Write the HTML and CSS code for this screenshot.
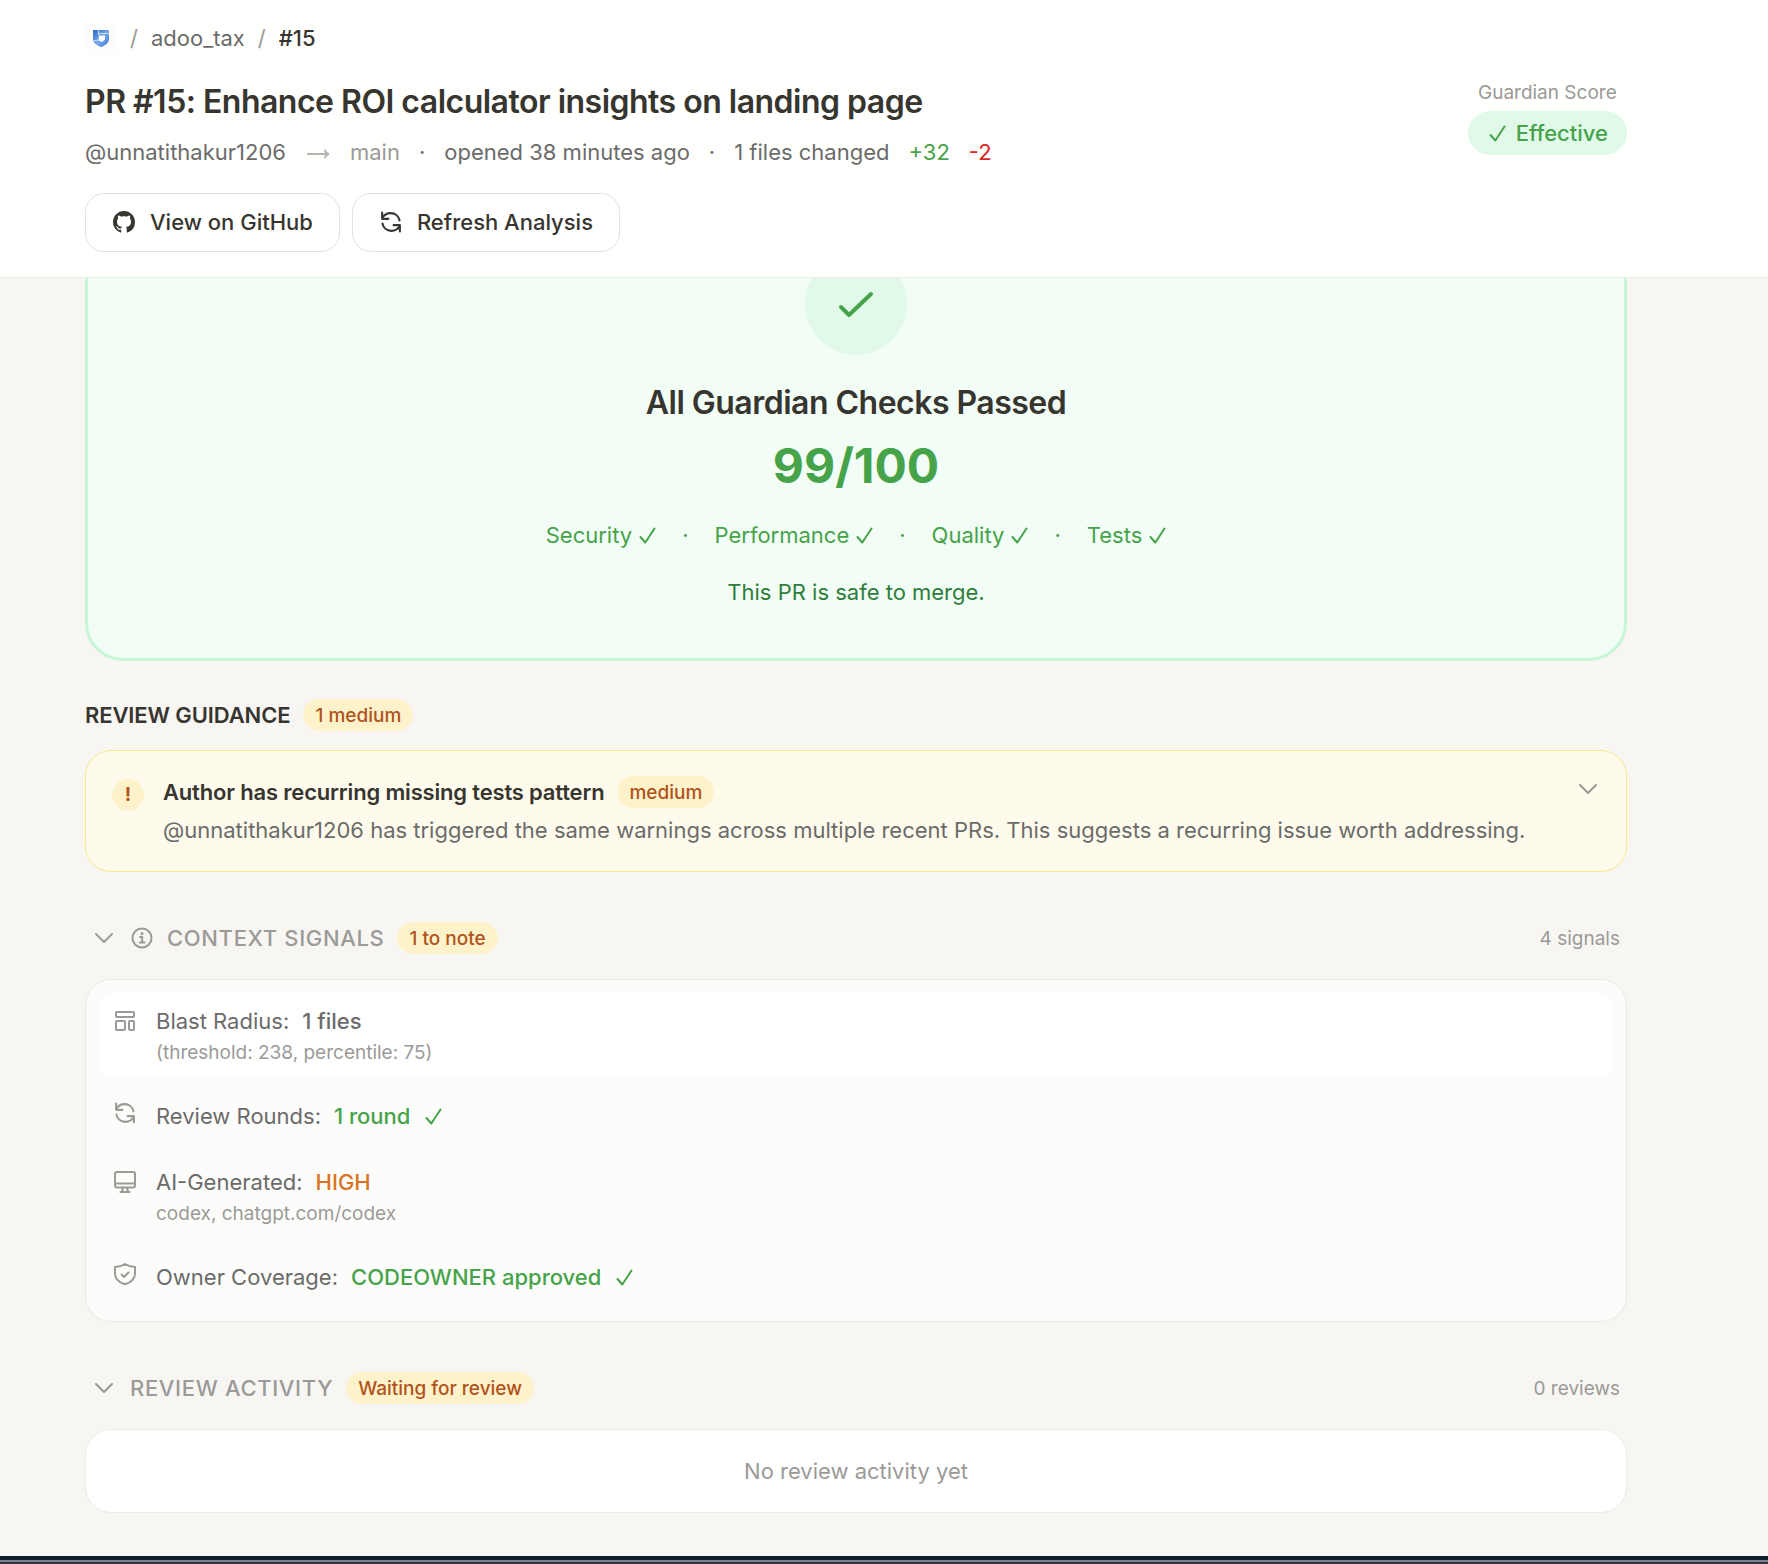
FILE: index.html
```html
<!DOCTYPE html>
<html lang="en">
<head>
<meta charset="utf-8">
<meta name="viewport" content="width=device-width, initial-scale=1">
<title>PR #15: Enhance ROI calculator insights on landing page</title>
<link rel="stylesheet" href="styles.css">
</head>
<body>
<svg class="sprite" aria-hidden="true">
  <symbol id="refresh" viewBox="0 0 20 20"><path d="M1.500 1v6h6M1.500 6.500C3 3.500 6 1.500 9.700 1.500c4.300 0 7.700 3 8.500 7M18.500 19v-6h-6M18.500 13.500c-1.500 3-4.500 5-8.200 5-4.300 0-7.700-3-8.500-7" transform="translate(.5 .5) scale(.95)"/></symbol>
  <symbol id="chevron" viewBox="0 0 20 20"><path d="M2 6l8 8 8-8"/></symbol>
  <symbol id="tick" viewBox="0 0 17 17"><path d="M1.500 10l4.800 5.500L15.500 1.500"/></symbol>
</svg>

<header class="header">
  <nav class="crumbs" aria-label="Breadcrumb">
    <a class="logo" href="#" aria-label="Home">
      <svg viewBox="0 0 32 32" width="32" height="32" aria-hidden="true">
        <defs><linearGradient id="shield" x1="0" y1="0" x2="1" y2="1"><stop offset="0" stop-color="#2f69c4"/><stop offset=".5" stop-color="#75a7ea"/><stop offset="1" stop-color="#3a7cdb"/></linearGradient></defs>
        <rect width="32" height="32" fill="#fdfdfe"/>
        <path d="M8 8h16v9c0 4-4 6.500-8 8-4-1.500-8-4-8-8z" fill="url(#shield)"/>
        <path d="M14 13.500h6v4L17 20l-3.500-1.500z" fill="#fff"/>
        <path d="M13.500 8.500v5M13.500 11.500h10.500M8 19l5.500-1" stroke="#c9def8" stroke-width="1"/>
      </svg>
    </a>
    <span class="sep">/</span>
    <a href="#">adoo_tax</a>
    <span class="sep">/</span>
    <span class="current" aria-current="page">#15</span>
  </nav>
  <div class="headline">
    <div>
      <h1>PR #15: Enhance ROI calculator insights on landing page</h1>
      <div class="meta">
        <span>@unnatithakur1206</span>
        <svg class="arrow" viewBox="0 0 26 32" aria-label="into" role="img"><path d="M3 18h20M20 14.500c.5 1.800 1.500 3 3.500 3.500-2 .5-3 1.700-3.500 3.500"/></svg>
        <span class="faint">main</span>
        <span>·</span>
        <span>opened 38 minutes ago</span>
        <span>·</span>
        <span>1 files changed</span>
        <span class="added">+32</span>
        <span class="removed">-2</span>
      </div>
    </div>
    <div class="score">
      <span class="score-label">Guardian Score</span>
      <span class="score-pill"><svg class="tick line" aria-hidden="true"><use href="#tick"/></svg>Effective</span>
    </div>
  </div>
  <div class="actions">
    <a class="button" href="#">
      <svg class="icon" viewBox="0 0 16 16" aria-hidden="true"><path fill="currentColor" d="M8 0C3.580 0 0 3.580 0 8c0 3.540 2.290 6.530 5.470 7.590.4.070.55-.17.55-.38 0-.19-.01-.82-.01-1.490-2.010.37-2.530-.49-2.690-.94-.09-.23-.48-.94-.82-1.130-.28-.15-.68-.52-.01-.53.63-.01 1.080.58 1.230.82.72 1.210 1.870.87 2.330.66.07-.52.28-.87.51-1.070-1.780-.2-3.640-.89-3.640-3.950 0-.87.31-1.590.82-2.150-.08-.2-.36-1.020.08-2.120 0 0 .67-.21 2.200.82.640-.18 1.320-.27 2-.27s1.360.09 2 .27c1.530-1.040 2.200-.82 2.200-.82.44 1.100.16 1.920.08 2.120.51.56.82 1.270.82 2.150 0 3.070-1.870 3.750-3.650 3.950.29.25.54.73.54 1.480 0 1.070-.01 1.930-.01 2.200 0 .21.15.46.55.38A8.010 8.010 0 0 0 16 8c0-4.420-3.580-8-8-8z"/></svg>
      View on GitHub
    </a>
    <button class="button" type="button">
      <svg class="icon line" aria-hidden="true"><use href="#refresh"/></svg>
      Refresh Analysis
    </button>
  </div>
</header>

<main class="main">
  <section class="passed">
    <div class="passed-icon"><svg class="line" viewBox="0 0 40 32" width="40" height="32" aria-hidden="true"><path d="M5 19l8 8L35 6"/></svg></div>
    <h2>All Guardian Checks Passed</h2>
    <p class="total">99/100</p>
    <p class="checks">
      <span class="check">Security<svg class="tick line" aria-hidden="true"><use href="#tick"/></svg></span><span>·</span>
      <span class="check">Performance<svg class="tick line" aria-hidden="true"><use href="#tick"/></svg></span><span>·</span>
      <span class="check">Quality<svg class="tick line" aria-hidden="true"><use href="#tick"/></svg></span><span>·</span>
      <span class="check">Tests<svg class="tick line" aria-hidden="true"><use href="#tick"/></svg></span>
    </p>
    <p class="safe">This PR is safe to merge.</p>
  </section>

  <section class="guidance">
    <div class="guidance-head"><h2>REVIEW GUIDANCE</h2><span class="badge">1 medium</span></div>
    <article class="warning">
      <span class="alert">!</span>
      <div class="warning-text">
        <div class="warning-title"><h3>Author has recurring missing tests pattern</h3><span class="badge">medium</span></div>
        <p>@unnatithakur1206 has triggered the same warnings across multiple recent PRs. This suggests a recurring issue worth addressing.</p>
      </div>
      <button class="toggle" type="button" aria-label="Expand"><svg class="chevron line" aria-hidden="true"><use href="#chevron"/></svg></button>
    </article>
  </section>

  <section class="group">
    <button class="group-head" type="button">
      <svg class="chevron line" aria-hidden="true"><use href="#chevron"/></svg>
      <svg class="icon line" viewBox="0 0 22 22" aria-hidden="true"><circle cx="11" cy="11" r="9.500"/><path d="M9 10h2.200v5.500M8.800 15.500h4.700"/><circle cx="11" cy="6.600" r=".6"/></svg>
      <span class="group-title">CONTEXT SIGNALS</span>
      <span class="badge">1 to note</span>
      <span class="count">4 signals</span>
    </button>
    <ul class="signals">
      <li class="signal active">
        <svg class="icon line" viewBox="0 0 22 22" aria-hidden="true"><rect x="2" y="2" width="18" height="5" rx="1"/><rect x="2" y="11" width="9" height="9" rx="1"/><rect x="15" y="11" width="5" height="9" rx="1"/></svg>
        <div><p class="line-text">Blast Radius: <strong>1 files</strong></p><p class="note">(threshold: 238, percentile: 75)</p></div>
      </li>
      <li class="signal tall">
        <svg class="icon line" aria-hidden="true"><use href="#refresh"/></svg>
        <p class="line-text">Review Rounds: <strong class="good">1 round</strong><svg class="tick line" aria-hidden="true"><use href="#tick"/></svg></p>
      </li>
      <li class="signal">
        <svg class="icon line" viewBox="0 0 22 22" aria-hidden="true"><rect x="1" y="1" width="20" height="15.500" rx="2"/><path d="M1 12.500h20M9 16.500L8 21M13 16.500l1 4.500M6.500 21h9"/></svg>
        <div><p class="line-text">AI-Generated: <strong class="high">HIGH</strong></p><p class="note">codex, chatgpt.com/codex</p></div>
      </li>
      <li class="signal tall">
        <svg class="icon line" viewBox="0 0 22 22" aria-hidden="true"><path d="M11 1c3 2 6 3 10 3v6.500c0 5-4 9-10 10.800C5 19.500 1 15.500 1 10.500V4c4 0 7-1 10-3zM7.500 11.500l2.500 2.500 4.500-4.500"/></svg>
        <p class="line-text">Owner Coverage: <strong class="good">CODEOWNER approved</strong><svg class="tick line" aria-hidden="true"><use href="#tick"/></svg></p>
      </li>
    </ul>
  </section>

  <section class="group">
    <button class="group-head" type="button">
      <svg class="chevron line" aria-hidden="true"><use href="#chevron"/></svg>
      <span class="group-title">REVIEW ACTIVITY</span>
      <span class="badge">Waiting for review</span>
      <span class="count">0 reviews</span>
    </button>
    <div class="empty">No review activity yet</div>
  </section>
</main>
<div class="edge"></div>
</body>
</html>
```
FILE: styles.css
```css
* { box-sizing: border-box; }
body {
  margin: 0;
  min-height: 100vh;
  display: flex;
  flex-direction: column;
  background: #f7f6f3;
  color: #37352f;
  font: 400 22px/32px Inter, "Liberation Sans", sans-serif;
}
h1, h2, h3, p, ul { margin: 0; padding: 0; }
h1, h2, h3 { font-weight: 600; }
a { color: inherit; text-decoration: none; }
button { font: inherit; color: inherit; background: none; border: 0; padding: 0; text-align: left; }
.sprite { position: absolute; width: 0; height: 0; }
.line { fill: none; stroke: currentColor; stroke-width: 2; stroke-linecap: round; stroke-linejoin: round; }
.icon { width: 22px; height: 22px; flex: none; }
.chevron { width: 20px; height: 20px; flex: none; color: #9b9a97; }
.tick { width: 17px; height: 17px; flex: none; }

.header {
  position: relative;
  z-index: 1;
  padding: 22px 141px 25px 85px;
  background: #fffffe;
  border-bottom: 1px solid #ebeae9;
}
.crumbs { display: flex; align-items: center; gap: 13px; color: #6b6b6b; }
.logo { display: flex; }
.sep { color: #9b9a97; }
.current { font-weight: 500; color: #37352f; }
.headline { display: flex; justify-content: space-between; margin-top: 24px; }
h1 { font-size: 32px; line-height: 48px; letter-spacing: -0.016em; }
.meta { display: flex; gap: 19px; margin-top: 10px; color: #6b6b6b; }
.arrow { width: 26px; height: 32px; fill: none; stroke: #b4b3b0; stroke-width: 2; stroke-linecap: round; stroke-linejoin: round; }
.faint { color: #9b9a97; }
.added { color: #46a34a; }
.removed { color: #dc2626; }
.score { display: flex; flex-direction: column; align-items: center; gap: 3px; }
.score-label { color: #9b9a97; font-size: 19px; line-height: 30px; }
.score-pill { display: flex; align-items: center; gap: 10px; padding: 6px 19px 6px 21px; border-radius: 22px; background: #e1f9e8; color: #46a34a; font-weight: 500; }
.actions { display: flex; gap: 12px; margin-top: 25px; }
.button {
  display: flex;
  align-items: center;
  gap: 15px;
  height: 59px;
  padding: 0 26px 1px 27px;
  border: 1px solid #e3e2e0;
  border-radius: 19px;
  background: #fff;
  font-weight: 500;
}

.main { flex: 1; padding: 0 141px 43px 85px; }
.passed {
  margin-top: -77px;
  padding: 49px 48px 50px;
  display: flex;
  flex-direction: column;
  align-items: center;
  border: 3px solid #c6f6d5;
  border-radius: 38px;
  background: #f2fdf5;
  color: #46a34a;
}
.passed-icon { display: flex; align-items: center; justify-content: center; width: 102px; height: 102px; border-radius: 50%; background: #e1f9e8; }
.passed-icon .line { stroke-width: 4; }
.passed h2 { margin-top: 26px; font-size: 32px; line-height: 44px; color: #37352f; letter-spacing: -0.016em; }
.total { margin-top: 12px; font-size: 48px; line-height: 58px; font-weight: 700; }
.checks { display: flex; gap: 26px; margin-top: 24px; }
.check { display: flex; align-items: center; gap: 7px; }
.safe { margin-top: 25px; color: #2f7d3b; }

.guidance { margin-top: 38px; }
.guidance-head { display: flex; align-items: center; gap: 13px; }
.guidance-head h2 { font-size: 22px; line-height: 32px; letter-spacing: -0.005em; }
.badge { padding: 1px 12px 0; border-radius: 16px; background: #fdf2ca; color: #b0531c; font-size: 19px; line-height: 31px; font-weight: 500; }
.warning { display: flex; margin-top: 19px; padding: 25px; border: 1px solid #fae88f; border-radius: 26px; background: #fefbec; }
.alert { flex: none; width: 32px; height: 32px; margin: 3px 19px 0 1px; border-radius: 50%; background: #fdf2ca; color: #b0531c; font-size: 19px; font-weight: 700; text-align: center; }
.warning-text { flex: 1; }
.warning-title { display: flex; align-items: center; gap: 13px; }
h3 { font-size: 22px; letter-spacing: -0.008em; }
.warning p { margin-top: 6px; color: #6b6b6b; }
.toggle { align-self: flex-start; display: flex; padding: 3px; }

.group { margin-top: 50px; }
.group-head { display: flex; align-items: center; width: 100%; padding: 0 7px 0 9px; }
.group-head .chevron { margin-right: 16px; }
.group-head .icon { margin: 0 14px 0 1px; color: #9b9a97; }
.group-title { margin-right: 13px; color: #9b9a97; font-weight: 500; letter-spacing: 0.03em; }
.count { margin-left: auto; padding-top: 1px; color: #9b9a97; font-size: 19px; line-height: 31px; }
.signals { display: flex; flex-direction: column; gap: 7px; margin-top: 25px; padding: 13px; border: 1px solid #e9e9e7; border-radius: 26px; background: #fcfcfa; list-style: none; }
.signal { display: flex; align-items: flex-start; gap: 20px; padding: 13px 13px 12px 15px; border-radius: 19px; color: #6b6b6b; }
.signal .icon { margin-top: 4px; color: #9b9a97; }
.active { background: #fff; }
.line-text { display: flex; align-items: center; gap: 13px; line-height: 31px; }
.tall .line-text { line-height: 37px; }
.signal strong { font-weight: 500; }
.signal .good, .signal .tick { color: #46a34a; }
.signal .high { color: #d9731f; }
.signal .tick { margin-left: 2px; }
.note { margin-top: 2px; font-size: 19px; line-height: 27px; color: #9b9a97; }
.empty { margin-top: 25px; padding: 25px; border: 1px solid #ebeae9; border-radius: 26px; background: #fff; color: #9b9a97; text-align: center; }
.edge { height: 8px; background: linear-gradient(#0f1c2a 4px, #7d8490 4px 6px, #35363b 6px); }
```
